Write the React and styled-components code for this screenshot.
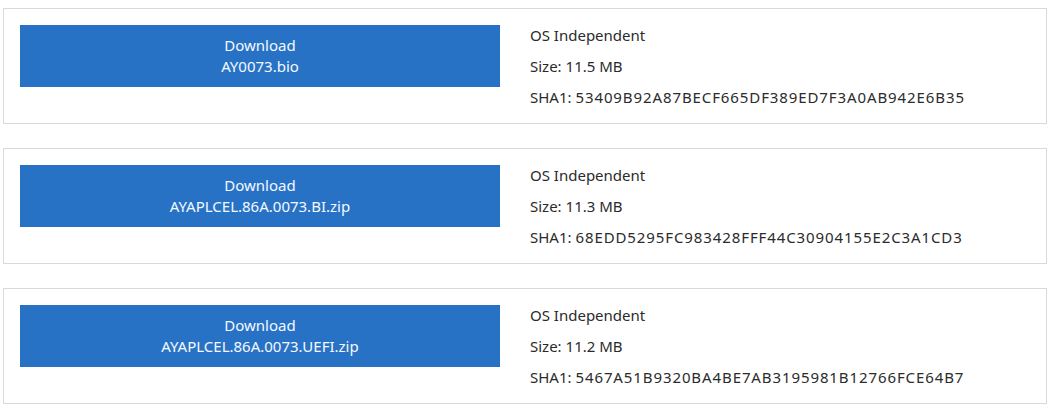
import React from "react";
import styled, { createGlobalStyle } from "styled-components";

const Global = createGlobalStyle`
  html, body { margin: 0; padding: 0; background: #fff; }
  body { font-family: "Noto Sans", "Open Sans", sans-serif; }
`;

const List = styled.div`
  display: flex;
  flex-direction: column;
  gap: 24px;
  padding: 8px 5px 0 3px;
`;

const Card = styled.div`
  display: flex;
  align-items: flex-start;
  border: 1px solid #d9d9d9;
  padding: 16px;
  background: #fff;
`;

const DownloadButton = styled.a`
  flex: 0 0 480px;
  height: 62px;
  display: flex;
  flex-direction: column;
  align-items: center;
  justify-content: center;
  background: #2872c6;
  color: #f4f9ff;
  font-size: 15px;
  line-height: 21px;
  text-decoration: none;
  cursor: pointer;
`;

const Info = styled.div`
  margin-left: 30px;
  display: flex;
  flex-direction: column;
  gap: 11px;
  color: #2b2b2b;
  font-size: 15px;
  line-height: 20px;
`;

const Line = styled.div``;

const Hash = styled.span`
  letter-spacing: 0.9px;
`;

const files = [
  { name: "AY0073.bio", size: "11.5 MB", sha: "53409B92A87BECF665DF389ED7F3A0AB942E6B35" },
  { name: "AYAPLCEL.86A.0073.BI.zip", size: "11.3 MB", sha: "68EDD5295FC983428FFF44C30904155E2C3A1CD3" },
  { name: "AYAPLCEL.86A.0073.UEFI.zip", size: "11.2 MB", sha: "5467A51B9320BA4BE7AB3195981B12766FCE64B7" },
];

export default function App() {
  return (
    <>
      <Global />
      <List>
        {files.map((f) => (
          <Card key={f.name}>
            <DownloadButton>
              <span>Download</span>
              <span>{f.name}</span>
            </DownloadButton>
            <Info>
              <Line>OS Independent</Line>
              <Line>Size: {f.size}</Line>
              <Line>
                SHA1: <Hash>{f.sha}</Hash>
              </Line>
            </Info>
          </Card>
        ))}
      </List>
    </>
  );
}
